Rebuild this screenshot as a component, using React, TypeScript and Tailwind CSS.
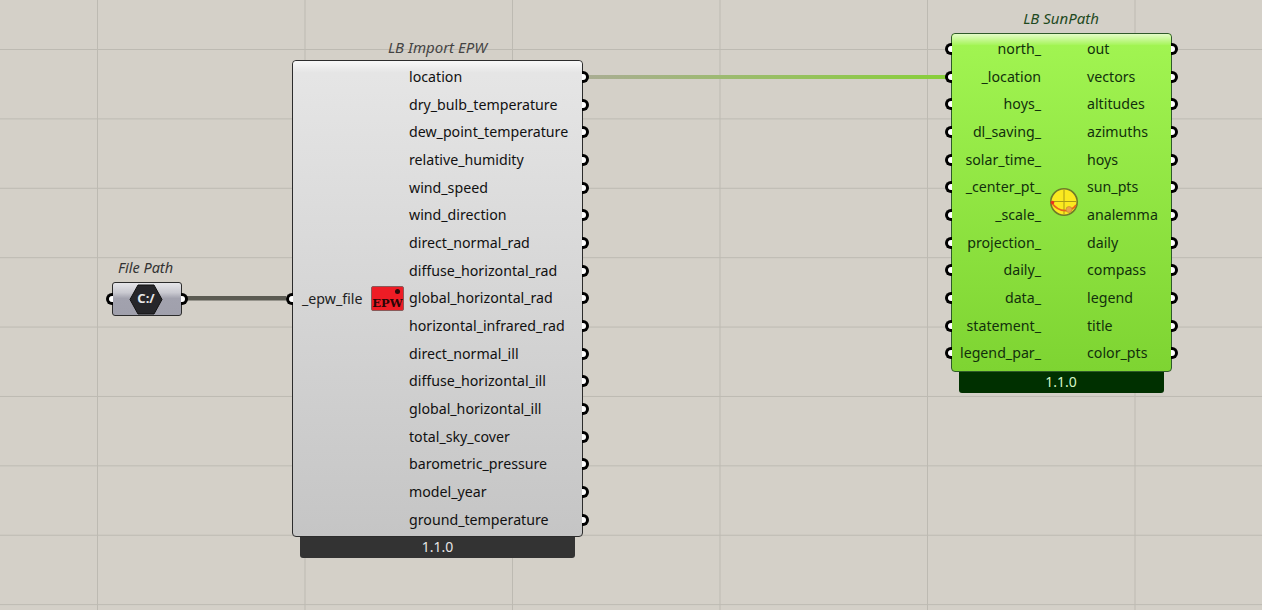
const importOutputs = [
  "location",
  "dry_bulb_temperature",
  "dew_point_temperature",
  "relative_humidity",
  "wind_speed",
  "wind_direction",
  "direct_normal_rad",
  "diffuse_horizontal_rad",
  "global_horizontal_rad",
  "horizontal_infrared_rad",
  "direct_normal_ill",
  "diffuse_horizontal_ill",
  "global_horizontal_ill",
  "total_sky_cover",
  "barometric_pressure",
  "model_year",
  "ground_temperature",
];

const sunInputs = [
  "north_",
  "_location",
  "hoys_",
  "dl_saving_",
  "solar_time_",
  "_center_pt_",
  "_scale_",
  "projection_",
  "daily_",
  "data_",
  "statement_",
  "legend_par_",
];

const sunOutputs = [
  "out",
  "vectors",
  "altitudes",
  "azimuths",
  "hoys",
  "sun_pts",
  "analemma",
  "daily",
  "compass",
  "legend",
  "title",
  "color_pts",
];

function PortRight() {
  return (
    <span className="absolute left-full top-1/2 -translate-y-1/2 w-[7px] h-[12px] rounded-r-full border-[3px] border-l-0 border-black bg-white" />
  );
}

function PortLeft() {
  return (
    <span className="absolute right-full top-1/2 -translate-y-1/2 w-[7px] h-[12px] rounded-l-full border-[3px] border-r-0 border-black bg-white" />
  );
}

function EpwIcon() {
  return (
    <div className="relative w-[33px] h-[25px] shrink-0 rounded-[2px] bg-[#ee1c25] border border-[#8a5a5a] overflow-hidden">
      <span className="absolute right-[3px] top-[2px] w-[5px] h-[5px] rounded-full bg-[#2a0a0a]" />
      <span className="absolute left-0 right-0 bottom-[1px] text-center text-[11.5px] leading-[12px] font-bold whitespace-nowrap text-[#2a0505] font-['DejaVu_Serif',serif]">
        EPW
      </span>
    </div>
  );
}

function SunIcon() {
  return (
    <svg width="30" height="30" viewBox="0 0 30 30" className="shrink-0 mb-[2px]">
      <circle cx="15" cy="15" r="13.2" fill="#fbe920" stroke="#6f7a2a" strokeWidth="1.6" />
      <path d="M15 2.5V27.5M2.5 14.5H27.5" stroke="#a89a18" strokeWidth="1" fill="none" />
      <path d="M2.5 15.5C7 22 13 24 18 23.5C22 23 25 21 27 18" stroke="#e8631c" strokeWidth="1.6" fill="none" />
      <circle cx="3.5" cy="15.5" r="1.8" fill="#e8331c" />
      <circle cx="20" cy="22.5" r="3" fill="#eda04a" stroke="#b8862a" strokeWidth="0.6" />
    </svg>
  );
}

function FilePath() {
  return (
    <div className="absolute left-[112px] top-[258px] w-[70px] font-['Noto_Sans',sans-serif]">
      <div className="absolute -top-[1px] left-[6px] whitespace-nowrap text-[14.5px] leading-[20px] italic text-[#333]">File Path</div>
      <div className="absolute top-[24px] left-0 w-[70px] h-[34px] pr-[2px] rounded-[3px] border border-[#2c2c2c] bg-[linear-gradient(to_bottom,#e6e6ea_0%,#c9c9d0_30%,#a2a2ae_48%,#a0a0ac_100%)] flex items-center justify-center">
        <PortLeft />
        <PortRight />
        <svg width="34" height="31" viewBox="0 0 34 31">
          <polygon points="9,1 25,1 33,15.5 25,30 9,30 1,15.5" fill="#26262a" stroke="#111" strokeWidth="1" strokeLinejoin="round" />
        </svg>
        <span className="absolute inset-0 pr-[2px] flex items-center justify-center text-[13px] font-bold text-[#e8e8e8]">C:/</span>
      </div>
    </div>
  );
}

function ImportEpw() {
  return (
    <div className="absolute left-[292px] top-[37px] w-[291px] font-['Noto_Sans',sans-serif]">
      <div className="h-[23px] text-center text-[15px] leading-[20px] italic text-[#444] whitespace-nowrap">LB Import EPW</div>
      <div className="relative z-10 h-[477px] rounded-[4px] border border-[#2c2c2c] bg-[linear-gradient(to_bottom,#e6e6e6,#c5c5c5)] flex">
        <div className="absolute inset-x-0 top-0 h-[11px] rounded-t-[4px] bg-[linear-gradient(to_bottom,#f8f8f8,#e6e6e6)]" />
        <div className="relative w-[116px] flex items-center justify-between pl-[9px] pr-[5px]">
          <PortLeft />
          <span className="text-[14.2px] leading-[20px] text-[#222]">_epw_file</span>
          <EpwIcon />
        </div>
        <div className="relative flex-1 pt-[2px]">
          {importOutputs.map((name) => (
            <div key={name} className="relative h-[27.7px] flex items-center">
              <span className="text-[14.2px] leading-[20px] text-[#111] whitespace-nowrap">{name}</span>
              <PortRight />
            </div>
          ))}
        </div>
      </div>
      <div className="mx-[8px] h-[21px] rounded-b-[3px] bg-[#333333] text-center text-[14px] leading-[19px] text-[#e6e6e6]">1.1.0</div>
    </div>
  );
}

function SunPath() {
  return (
    <div className="absolute left-[951px] top-[9px] w-[221px] font-['Noto_Sans',sans-serif]">
      <div className="h-[24px] pr-[1px] text-center text-[15px] leading-[18px] italic text-[#1f4a1f] whitespace-nowrap">LB SunPath</div>
      <div className="relative h-[339px] rounded-[4px] border border-[#2f5a2a] bg-[linear-gradient(to_bottom,#a2f552,#7ed432)] flex">
        <div className="absolute inset-x-0 top-0 h-[11px] rounded-t-[4px] bg-[linear-gradient(to_bottom,#e4fcc8,#a6f55a)]" />
        <div className="relative w-[89px] pt-[1px]">
          {sunInputs.map((name) => (
            <div key={name} className="relative h-[27.7px] flex items-center justify-end">
              <PortLeft />
              <span className="text-[14.2px] leading-[20px] text-[#12300c] whitespace-nowrap">{name}</span>
            </div>
          ))}
        </div>
        <div className="relative w-[46px] flex items-center justify-center">
          <SunIcon />
        </div>
        <div className="relative flex-1 pt-[1px]">
          {sunOutputs.map((name) => (
            <div key={name} className="relative h-[27.7px] flex items-center">
              <span className="text-[14.2px] leading-[20px] text-[#12300c] whitespace-nowrap">{name}</span>
              <PortRight />
            </div>
          ))}
        </div>
      </div>
      <div className="mx-[8px] h-[21px] pr-[1px] rounded-b-[3px] bg-[#003000] text-center text-[14px] leading-[19px] text-[#d5f5c5]">1.1.0</div>
    </div>
  );
}

export default function App() {
  return (
    <div className="relative w-full h-[610px] overflow-hidden bg-[#d4d0c8] bg-[linear-gradient(to_right,#bdbab2_1px,transparent_1px),linear-gradient(to_bottom,#bdbab2_1px,transparent_1px)] bg-[size:207.5px_69.4px] bg-[position:97px_49px]">
      {/* wires sit under the nodes */}
      <svg className="absolute inset-0" width="1262" height="610">
        <defs>
          <linearGradient id="wire" x1="590" x2="945" y1="0" y2="0" gradientUnits="userSpaceOnUse">
            <stop offset="0" stopColor="#a9ad92" />
            <stop offset="1" stopColor="#88cf3a" />
          </linearGradient>
        </defs>
        <rect x="588" y="75" width="358" height="4" fill="url(#wire)" />
        <rect x="186" y="296" width="100" height="4.5" fill="#5b5a52" />
      </svg>
      <FilePath />
      <ImportEpw />
      <SunPath />
    </div>
  );
}
